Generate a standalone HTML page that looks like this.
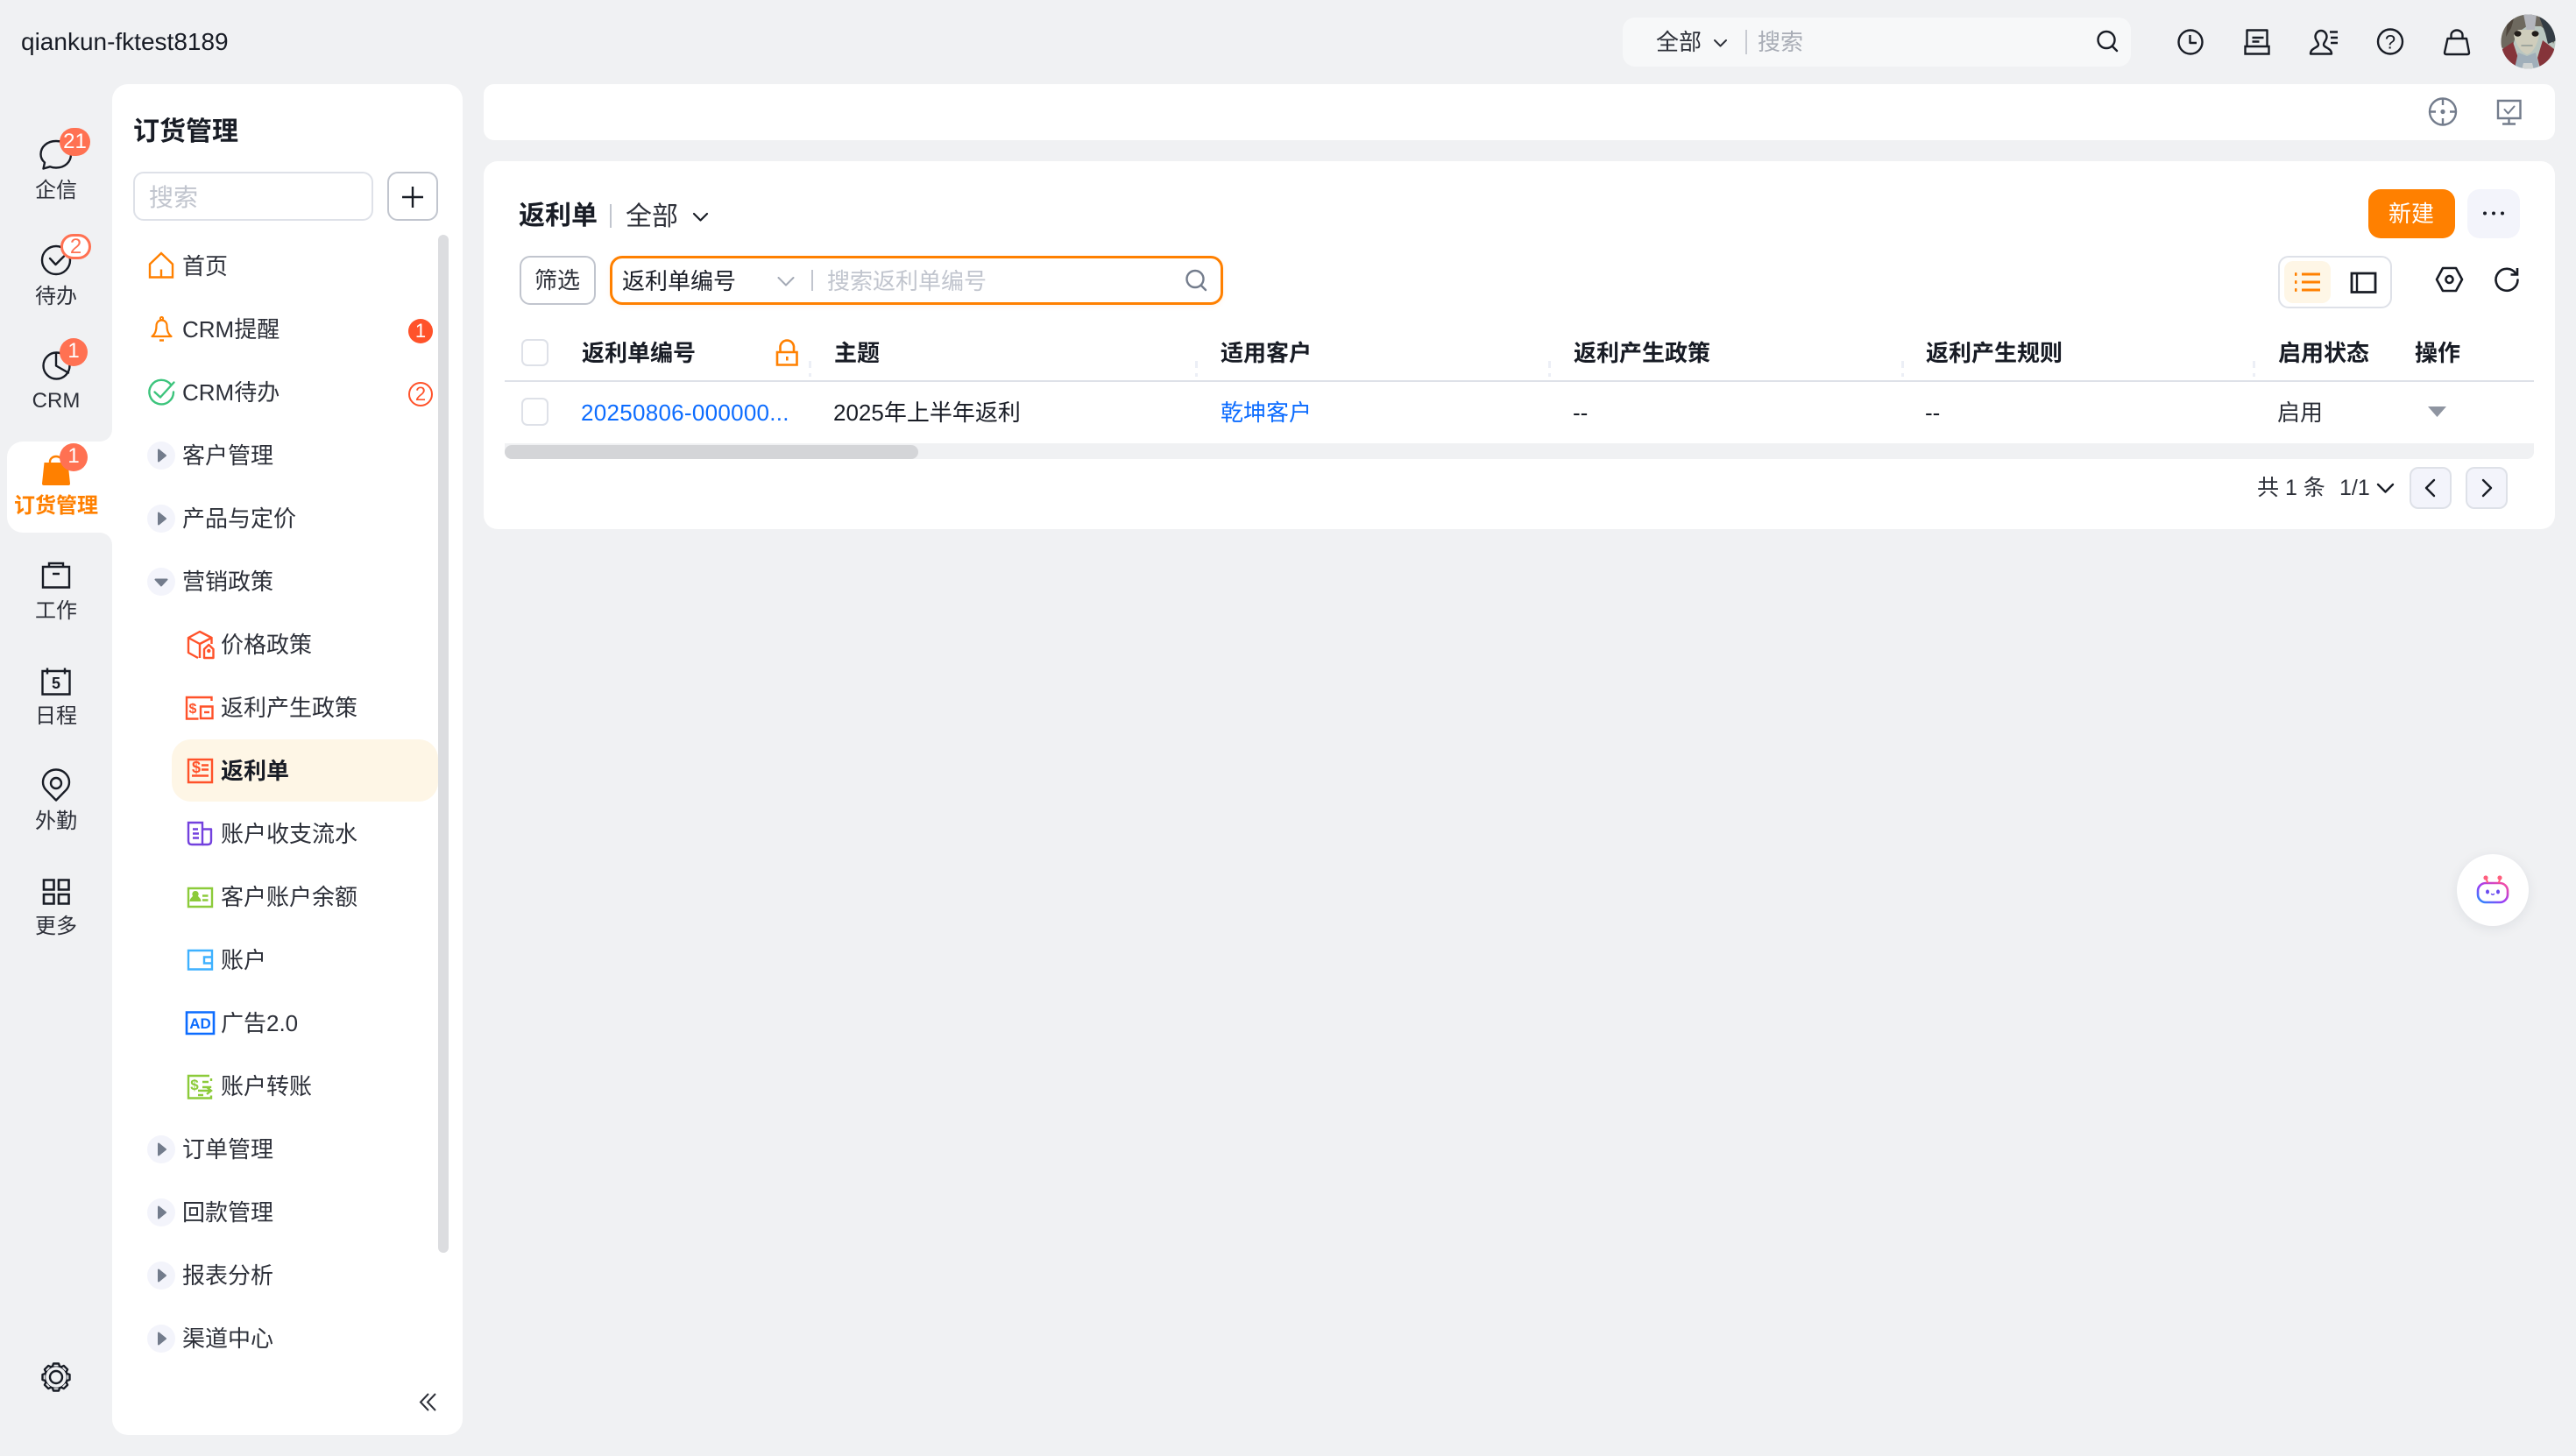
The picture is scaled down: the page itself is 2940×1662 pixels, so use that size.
<!DOCTYPE html>
<html lang="zh-CN">
<head>
<meta charset="utf-8">
<title>返利单</title>
<style>
html,body{margin:0;padding:0;width:2940px;height:1662px;overflow:hidden;background:#f0f1f3}
body{position:relative;font-family:"Liberation Sans","Noto Sans CJK SC",sans-serif;color:#181c25;-webkit-font-smoothing:antialiased}
.b{position:absolute;box-sizing:border-box}
.t{position:absolute;white-space:nowrap;line-height:40px;height:40px;font-size:26px;color:#2d3039}
.r{font-size:24px;width:128px;left:0;text-align:center;color:#2d3039}
.bold{font-weight:700;color:#181c25}
.link{color:#0c6cff}
.ph{color:#c1c5ce}
.bd{position:absolute;border-radius:50%;background:#ff7152;color:#fff;text-align:center;font-size:24px;box-sizing:border-box}
svg{position:absolute;left:0;top:0}
</style>
</head>
<body>
<!-- rail tile -->
<div class="b" style="left:100px;top:480px;width:40px;height:150px;background:#fff"></div>
<div class="b" style="left:80px;top:460px;width:48px;height:44px;background:#f0f1f3;border-bottom-right-radius:14px"></div>
<div class="b" style="left:80px;top:608px;width:48px;height:44px;background:#f0f1f3;border-top-right-radius:14px"></div>
<div class="b" style="left:8px;top:504px;width:120px;height:104px;background:#fff;border-radius:18px 0 0 18px"></div>

<!-- panels -->
<div class="b" style="left:128px;top:96px;width:400px;height:1542px;background:#fff;border-radius:18px"></div>
<div class="b" style="left:120px;top:504px;width:20px;height:104px;background:#fff"></div>
<div class="b" style="left:552px;top:96px;width:2364px;height:64px;background:#fff;border-radius:12px"></div>
<div class="b" style="left:552px;top:184px;width:2364px;height:420px;background:#fff;border-radius:16px"></div>

<!-- top -->
<div class="t" style="left:24px;top:28px;font-size:28px;color:#181c25">qiankun-fktest8189</div>
<div class="b" style="left:1852px;top:20px;width:580px;height:56px;background:#f7f8f9;border-radius:14px"></div>
<div class="t" style="left:1890px;top:28px;color:#2d3039">全部</div>
<div class="b" style="left:1992px;top:34px;width:2px;height:28px;background:#c8cbd2"></div>
<div class="t" style="left:2006px;top:28px;color:#a9adb6">搜索</div>

<!-- rail text -->
<div class="t r" style="top:198px">企信</div>
<div class="t r" style="top:319px">待办</div>
<div class="t r" style="top:438px">CRM</div>
<div class="t r" style="top:558px;color:#ff8000;font-weight:700">订货管理</div>
<div class="t r" style="top:678px">工作</div>
<div class="t r" style="top:798px">日程</div>
<div class="t r" style="top:918px">外勤</div>
<div class="t r" style="top:1038px">更多</div>

<!-- panel head -->
<div class="t bold" style="left:152px;top:131px;font-size:30px">订货管理</div>
<div class="b" style="left:152px;top:196px;width:274px;height:56px;border:2px solid #dee1e8;border-radius:12px"></div>
<div class="t ph" style="left:170px;top:206px;font-size:28px">搜索</div>
<div class="b" style="left:442px;top:196px;width:58px;height:56px;border:2px solid #c1c5ce;border-radius:12px"></div>

<!-- menu -->
<div class="b" style="left:196px;top:844px;width:304px;height:71px;background:#fef6e6;border-radius:22px"></div>
<div class="b" style="left:500px;top:268px;width:12px;height:1162px;background:#dcdde0;border-radius:6px"></div>
<div class="t" style="left:208px;top:284px">首页</div>
<div class="t" style="left:208px;top:356px">CRM提醒</div>
<div class="t" style="left:208px;top:428px">CRM待办</div>
<div class="t" style="left:208px;top:500px">客户管理</div>
<div class="t" style="left:208px;top:572px">产品与定价</div>
<div class="t" style="left:208px;top:644px">营销政策</div>
<div class="t" style="left:252px;top:716px">价格政策</div>
<div class="t" style="left:252px;top:788px">返利产生政策</div>
<div class="t bold" style="left:252px;top:860px">返利单</div>
<div class="t" style="left:252px;top:932px">账户收支流水</div>
<div class="t" style="left:252px;top:1004px">客户账户余额</div>
<div class="t" style="left:252px;top:1076px">账户</div>
<div class="t" style="left:252px;top:1148px">广告2.0</div>
<div class="t" style="left:252px;top:1220px">账户转账</div>
<div class="t" style="left:208px;top:1292px">订单管理</div>
<div class="t" style="left:208px;top:1364px">回款管理</div>
<div class="t" style="left:208px;top:1436px">报表分析</div>
<div class="t" style="left:208px;top:1508px">渠道中心</div>

<div class="bd" style="left:466px;top:364px;width:28px;height:28px;background:#ff522a;font-size:22px;line-height:28px">1</div>
<div class="bd" style="left:466px;top:436px;width:28px;height:28px;background:#fff;border:2px solid #ff522a;color:#ff522a;font-size:22px;line-height:24px">2</div>

<!-- content head -->
<div class="t bold" style="left:592px;top:227px;font-size:30px">返利单</div>
<div class="b" style="left:696px;top:233px;width:2px;height:27px;background:#c1c5ce"></div>
<div class="t" style="left:714px;top:228px;font-size:30px;color:#2d3039">全部</div>

<div class="b" style="left:593px;top:292px;width:87px;height:56px;border:2px solid #c1c5ce;border-radius:12px"></div>
<div class="t" style="left:610px;top:300px">筛选</div>
<div class="b" style="left:696px;top:292px;width:700px;height:56px;border:3px solid #ff8000;border-radius:14px;box-shadow:0 2px 6px rgba(255,128,0,.08)"></div>
<div class="t" style="left:710px;top:301px;color:#181c25">返利单编号</div>
<div class="b" style="left:926px;top:308px;width:2px;height:24px;background:#c1c5ce"></div>
<div class="t ph" style="left:944px;top:301px">搜索返利单编号</div>

<div class="b" style="left:2703px;top:216px;width:99px;height:56px;background:#ff8000;border-radius:14px"></div>
<div class="t" style="left:2726px;top:224px;color:#fff">新建</div>
<div class="b" style="left:2816px;top:216px;width:60px;height:56px;background:#f3f4fb;border-radius:14px"></div>

<div class="b" style="left:2600px;top:292px;width:130px;height:60px;border:2px solid #dee1e8;border-radius:12px"></div>
<div class="b" style="left:2607px;top:298px;width:53px;height:48px;background:#fef6e6;border-radius:10px"></div>

<!-- table -->
<div class="b" style="left:595px;top:387px;width:31px;height:31px;border:2px solid #dee1e8;border-radius:7px"></div>
<div class="b" style="left:595px;top:454px;width:31px;height:32px;border:2px solid #dee1e8;border-radius:7px"></div>
<div class="t bold" style="left:664px;top:383px">返利单编号</div>
<div class="t bold" style="left:952px;top:383px">主题</div>
<div class="t bold" style="left:1393px;top:383px">适用客户</div>
<div class="t bold" style="left:1796px;top:383px">返利产生政策</div>
<div class="t bold" style="left:2198px;top:383px">返利产生规则</div>
<div class="t bold" style="left:2600px;top:383px">启用状态</div>
<div class="t bold" style="left:2756px;top:383px">操作</div>
<div class="b" style="left:576px;top:434px;width:2316px;height:2px;background:#dee1e8"></div>
<div class="t link" style="left:663px;top:451px;letter-spacing:.28px">20250806-000000...</div>
<div class="t" style="left:951px;top:451px;color:#181c25">2025年上半年返利</div>
<div class="t link" style="left:1393px;top:451px">乾坤客户</div>
<div class="t" style="left:1795px;top:451px;color:#181c25">--</div>
<div class="t" style="left:2197px;top:451px;color:#181c25">--</div>
<div class="t" style="left:2599px;top:451px;color:#2d3039">启用</div>
<div class="b" style="left:576px;top:506px;width:2316px;height:18px;background:#f0f1f3;border-radius:0 0 8px 8px"></div>
<div class="b" style="left:576px;top:508px;width:472px;height:16px;background:#d4d5d8;border-radius:8px"></div>

<!-- pagination -->
<div class="t" style="left:2576px;top:537px;font-size:25px">共 1 条</div>
<div class="t" style="left:2670px;top:537px;font-size:25px">1/1</div>
<div class="b" style="left:2750px;top:533px;width:48px;height:48px;background:#f3f4fb;border:2px solid #dee1e8;border-radius:10px"></div>
<div class="b" style="left:2814px;top:533px;width:48px;height:48px;background:#f3f4fb;border:2px solid #dee1e8;border-radius:10px"></div>

<!-- bot -->
<div class="b" style="left:2804px;top:975px;width:82px;height:82px;background:#fff;border-radius:50%;box-shadow:0 3px 14px rgba(30,40,70,.08)"></div>

<!-- ICONS -->
<svg width="2940" height="1662" viewBox="0 0 2940 1662" fill="none" stroke-linecap="round" stroke-linejoin="round">
<defs>
<linearGradient id="botg" x1="0" y1="1" x2="1" y2="0"><stop offset="0" stop-color="#1e90ff"/><stop offset=".45" stop-color="#9b3cf5"/><stop offset="1" stop-color="#ff4f9a"/></linearGradient>
<clipPath id="av"><circle cx="2885.500" cy="47.500" r="31"/></clipPath>
</defs>

<!-- Top search -->
<g stroke="#2d3039" stroke-width="2"><path d="M1957 46l6.500 6.500 6.500-6.500"/></g>
<g stroke="#181c25" stroke-width="2.400"><circle cx="2404" cy="45.500" r="9.500"/><path d="M2411 53l5 5"/></g>

<!-- Top icons -->
<g stroke="#181c25" stroke-width="2.400">
<circle cx="2500" cy="48" r="13.500"/><path d="M2499.500 40v9h7.500" stroke-linecap="butt"/>
<path d="M2564.500 53V34.500h23V53" stroke-linecap="butt"/><path d="M2562.500 53h27v8.500h-27z" stroke-linecap="butt" stroke-linejoin="miter"/><path d="M2570.500 43h13M2570.500 47.500h8" stroke-linecap="butt"/>
<path d="M2649 35c-4 0-6.500 3.500-6.500 7 0 4 3.500 6 3.500 9 0 3.500-9 3.500-9 10.500h24c0-7-9-7-9-10.500 0-3 3.500-5 3.500-9 0-3.500-2.500-7-6.500-7z"/><path d="M2659 36.500h9M2660 43h8M2660 49h8" stroke-linecap="butt"/>
<circle cx="2728" cy="47.500" r="14"/>
<path d="M2793.500 44h21.500l3 16q0 2-2 2h-24q-2 0-2-2z"/><path d="M2797.500 44v-4a6.500 5.500 0 0 1 13 0v4"/>
</g>
<text x="2728" y="55.500" text-anchor="middle" font-family="Liberation Sans" font-size="22" fill="#181c25">?</text>

<!-- Avatar -->
<g clip-path="url(#av)">
<rect x="2854" y="16" width="64" height="64" fill="#b9c6c0"/>
<path d="M2854 16h64v26l-4 8-4-12-10-8-16 0-12 8-4 14-2 6-12-4z" fill="#6e695f"/>
<path d="M2880 16l4 20 7-1 1 6 3-25z" fill="#b4b6bd"/>
<path d="M2897 16l8 22 3 12 10-4V16z" fill="#333c44"/>
<path d="M2862 20l-2 22 6-10 4-14z" fill="#4e453c"/>
<path d="M2869 40c2 10 8 20 15 22 7-1 12-12 14-22l-6-6h-18z" fill="#cfcdbc"/>
<ellipse cx="2873.500" cy="38.500" rx="4" ry="3.200" fill="#221d1a"/><ellipse cx="2893.500" cy="38.500" rx="4" ry="3.200" fill="#221d1a"/>
<path d="M2878 52h12" stroke="#8f9a94" stroke-width="1.500"/>
<path d="M2856 56l12-8 6 18-4 16h-14zM2915 56l-13-10-6 20 4 16h14z" fill="#85343a"/>
<path d="M2874 60l10 4 10-4 5 22h-30z" fill="#a0afba"/>
<path d="M2880 72h10l2 8h-14z" fill="#cfd3d2"/>
</g>

<!-- Bar right icons -->
<g stroke="#737c8c" stroke-width="2.400">
<circle cx="2788" cy="127.500" r="15"/><path d="M2788 113v7M2788 135v7M2773 127.500h7M2796 127.500h7" stroke-linecap="butt"/>
<circle cx="2788" cy="127.500" r="2.600" fill="#737c8c" stroke="none"/>
<path d="M2851 115h25.500v20h-25.500zM2863.500 135v6M2856 141.500h15" stroke-linecap="butt" stroke-linejoin="miter"/><path d="M2858.500 125l4 4.500 7-8" stroke-width="2"/>
</g>

<!-- Rail icons -->
<g stroke="#181c25" stroke-width="2.400">
<path d="M64 161c-10 0-17.500 6.500-17.500 15 0 3.800 1.500 7 4.500 9.500l-1.500 7 7.500-2.200c2 .8 4.500 1.200 7 1.200 10 0 17-6.500 17-15.500S74 161 64 161z"/>
<circle cx="64" cy="297" r="16"/><path d="M57 295l6.500 7 9.500-9.500"/>
<circle cx="64.500" cy="417.500" r="15"/><path d="M64 403v14.500l14 8"/>
<path d="M49 647h30v23.500H49zM56 647v-4h16v4M60 655h8" stroke-linecap="butt" stroke-linejoin="miter"/>
<path d="M48.500 766h31v26.500h-31zM54 762.500v7M74 762.500v7" stroke-linecap="butt" stroke-linejoin="miter"/>
<path d="M64 913.500l-11.500-11.800c-2.200-2.400-3.500-5.500-3.500-8.700 0-8 6.700-14.500 15-14.500s15 6.500 15 14.500c0 3.200-1.300 6.300-3.500 8.700z"/><circle cx="64" cy="894" r="6"/>
<path d="M50 1004.500h11.500v11H50zM67 1004.500h11.500v11H67zM50 1021h11.500v10.500H50zM67 1021h11.500v10.500H67z" stroke-linejoin="miter" stroke-width="2.600"/>
<circle cx="64" cy="1572" r="7"/>
<circle cx="64" cy="1572" r="13"/>
<path d="M60 1559.500l1-3h6l1 3" fill="#f0f1f3"/>
<path transform="rotate(45 64 1572)" d="M60 1559.500l1-3h6l1 3" fill="#f0f1f3"/>
<path transform="rotate(90 64 1572)" d="M60 1559.500l1-3h6l1 3" fill="#f0f1f3"/>
<path transform="rotate(135 64 1572)" d="M60 1559.500l1-3h6l1 3" fill="#f0f1f3"/>
<path transform="rotate(180 64 1572)" d="M60 1559.500l1-3h6l1 3" fill="#f0f1f3"/>
<path transform="rotate(225 64 1572)" d="M60 1559.500l1-3h6l1 3" fill="#f0f1f3"/>
<path transform="rotate(270 64 1572)" d="M60 1559.500l1-3h6l1 3" fill="#f0f1f3"/>
<path transform="rotate(315 64 1572)" d="M60 1559.500l1-3h6l1 3" fill="#f0f1f3"/>
</g>
<text x="64" y="786" text-anchor="middle" font-family="Liberation Sans" font-weight="700" font-size="18" fill="#181c25">5</text>
<path d="M50.500 528H77.500l2.500 24q0 2-2 2H50q-2 0-2-2z" fill="#ff8000"/>
<path d="M57 529v-2a7 6 0 0 1 14 0v2" stroke="#ff8000" stroke-width="2.400"/>

<!-- Plus -->
<path d="M459 225h24M471 213v24" stroke="#181c25" stroke-width="2.400" stroke-linecap="butt"/>

<!-- Menu top icons -->
<g stroke="#ff8000" stroke-width="2.400" stroke-linejoin="miter" stroke-linecap="butt">
<path d="M171 316.500v-15L184 289l13 12.500v15zM184 316.500v-9"/>
<path d="M173.500 384c4-3 5-8 5-12 0-4 2.500-6.500 6-6.500s6 2.500 6 6.500c0 4 1 9 5 12z" stroke-linejoin="round" stroke-width="2.200"/><path d="M182 388.500h5"/><circle cx="184.500" cy="363.500" r="1.600" stroke-width="2"/>
</g>
<g stroke="#3cc47c" stroke-width="2.400">
<path d="M195 439a13.800 13.800 0 1 0 3 8.500"/><path d="M176.500 447.500l6.500 6 15.500-17"/>
</g>

<!-- Expand arrows -->
<g fill="#f3f4fb">
<circle cx="184" cy="520" r="16"/><circle cx="184" cy="592" r="16"/><circle cx="184" cy="664" r="16"/>
<circle cx="184" cy="1312" r="16"/><circle cx="184" cy="1384" r="16"/><circle cx="184" cy="1456" r="16"/><circle cx="184" cy="1528" r="16"/>
</g>
<g fill="#737c8c" stroke="#737c8c" stroke-width="2">
<path d="M181 513.500v13l8-6.500z"/><path d="M181 585.500v13l8-6.500z"/>
<path d="M177.500 661.500h13l-6.500 7z"/>
<path d="M181 1305.500v13l8-6.500z"/><path d="M181 1377.500v13l8-6.500z"/><path d="M181 1449.500v13l8-6.500z"/><path d="M181 1521.500v13l8-6.500z"/>
</g>

<!-- Sub icons -->
<g stroke="#ff522a" stroke-width="2.400" stroke-linecap="butt">
<path d="M215 728l13-7 13.500 7-13.500 7zM215 728v17l11 6M228 735v16M241.500 728v7"/>
<path d="M233 751h10.500v-10l-5.200-5-5.300 5z"/><circle cx="238.300" cy="743" r="1" fill="#ff522a"/>
<path d="M241.500 800v-4H213v24.500h13.500" stroke-linejoin="miter"/><path d="M229 806.500h13.500V820H229z" stroke-linejoin="miter"/><path d="M233 813h6"/>
<path d="M215 867h27v26h-27z" stroke-linejoin="miter"/><path d="M230 873.500h8M230 878.500h8M219 885.500h19"/>
</g>
<g font-family="Liberation Sans" font-weight="700" font-size="16" fill="#ff522a" text-anchor="middle">
<text x="220" y="814">$</text><text x="224" y="882" font-size="18">$</text>
</g>
<g stroke="#7341de" stroke-width="2.400" stroke-linecap="butt">
<path d="M215 939h16v25h-12q-4 0-4-4z" stroke-linejoin="miter"/><path d="M231 946.500h10V960q0 4-4 4h-6"/><path d="M220 946.500h6M220 951.500h7M220 956.500h7"/>
</g>
<g stroke="#8ccb3a" stroke-width="2.400" stroke-linecap="butt">
<path d="M215 1014h27v21h-27z" stroke-linejoin="miter"/><path d="M231 1022.500h6.500M231 1027.500h6.500"/>
</g>
<path d="M223 1017a3.500 3.500 0 0 1 3 5.500c0 1.500 3.500 2.500 3.500 6.500h-13c0-4 3.500-5 3.500-6.500a3.500 3.500 0 0 1 3-5.500z" fill="#8ccb3a"/>
<g stroke="#3eb1ff" stroke-width="2.400" stroke-linecap="butt" stroke-linejoin="miter">
<path d="M215 1085h27v21.500h-27z"/><path d="M242 1092.500h-9v7h9"/>
</g>
<path d="M213 1155.500h31v24.500h-31z" stroke="#0c6cff" stroke-width="2.600" stroke-linejoin="miter"/>
<text x="228.500" y="1174" text-anchor="middle" font-family="Liberation Sans" font-weight="700" font-size="17" fill="#0c6cff">AD</text>
<g stroke="#8ccb3a" stroke-width="2.400" stroke-linecap="butt" stroke-linejoin="miter">
<path d="M239 1228h-24v25.500h26v-3M241 1234v-3M231 1235h7"/><path d="M231 1241h9v1M226 1245h14M236 1241l5 4-5 4M226 1250h6"/>
</g>
<text x="222" y="1244" text-anchor="middle" font-family="Liberation Sans" font-weight="700" font-size="17" fill="#8ccb3a">$</text>

<!-- Collapse -->
<path d="M489 1591l-9 9.500 9 9.500M497 1591l-9 9.500 9 9.500" stroke="#2d3039" stroke-width="2" stroke-linecap="butt" stroke-linejoin="miter"/>

<!-- Content -->
<path d="M792 244l7.500 7.500 7.500-7.500" stroke="#181c25" stroke-width="2.200"/>
<path d="M888.500 317l8.500 8.500 8.500-8.500" stroke="#a3a9b5" stroke-width="2"/>
<g stroke="#737c8c" stroke-width="2.400"><circle cx="1364" cy="318.500" r="9.500"/><path d="M1371 326l5 5"/></g>
<!-- lock -->
<g stroke="#ff8000" stroke-width="2.600" stroke-linecap="butt"><path d="M887 402h22.500v14.500H887z" stroke-linejoin="miter"/><path d="M890.500 402v-6.500a7.800 7.800 0 0 1 15.500 0v6.500M898.300 407v4.500"/></g>
<!-- separators -->
<g fill="#eceff6">
<rect x="923" y="412" width="3" height="8"/><rect x="923" y="426" width="3" height="4"/>
<rect x="1364" y="412" width="3" height="8"/><rect x="1364" y="426" width="3" height="4"/>
<rect x="1767" y="412" width="3" height="8"/><rect x="1767" y="426" width="3" height="4"/>
<rect x="2170" y="412" width="3" height="8"/><rect x="2170" y="426" width="3" height="4"/>
<rect x="2571" y="412" width="3" height="8"/><rect x="2571" y="426" width="3" height="4"/>
</g>
<path d="M2771 464h21l-10.500 12z" fill="#8f95a1"/>
<!-- more dots -->
<g fill="#181c25"><circle cx="2836" cy="243.500" r="2"/><circle cx="2846" cy="243.500" r="2"/><circle cx="2856" cy="243.500" r="2"/></g>
<!-- list/card -->
<g fill="#ff8000"><rect x="2619" y="311" width="2.500" height="4" rx="1"/><rect x="2619" y="320" width="2.500" height="4" rx="1"/><rect x="2619" y="329" width="2.500" height="4" rx="1"/>
<rect x="2627" y="311.500" width="21" height="3"/><rect x="2627" y="320.500" width="21" height="3"/><rect x="2627" y="329.500" width="21" height="3"/></g>
<g stroke="#181c25" stroke-width="2.800" stroke-linecap="butt"><path d="M2684 312h27v21.500h-27z" stroke-linejoin="miter"/><path d="M2690 312v21.500" stroke-width="2.400"/></g>
<!-- hex / refresh -->
<g stroke="#181c25" stroke-width="2.600">
<path d="M2788 306h15l7 13-7 13h-15l-7-13z"/><circle cx="2795.500" cy="319" r="4"/>
<path d="M2871.500 312.500a12.500 12.500 0 1 0 2 7"/><path d="M2873 306v7.500h-7.500" stroke-linecap="butt" stroke-linejoin="miter"/>
</g>
<!-- pagination -->
<g stroke="#181c25" stroke-width="2.400">
<path d="M2714 553l8.500 8.500 8.500-8.500"/><path d="M2778 548l-9 9 9 9"/><path d="M2834 548l9 9-9 9"/>
</g>
<!-- bot -->
<rect x="2828" y="1008" width="34" height="22" rx="9" stroke="url(#botg)" stroke-width="2.600"/>
<path d="M2839 1007l-1.500-4M2852 1007l1.500-4" stroke="#ff5f7e" stroke-width="2"/>
<circle cx="2837" cy="1002" r="2.600" fill="#ff5f7e"/><circle cx="2853" cy="1002" r="2.600" fill="#ff5f7e"/>
<ellipse cx="2839" cy="1018" rx="2" ry="2.500" fill="#6a4cf0"/><ellipse cx="2851" cy="1018" rx="2" ry="2.500" fill="#6a4cf0"/>
<path d="M2843.500 1020.500q1.500 1.500 3 0" stroke="#6a4cf0" stroke-width="1.400"/>
</svg>

<!-- Rail badges (above icons) -->
<div class="bd" style="left:68px;top:146px;width:35px;height:32px;border-radius:16px;line-height:32px;z-index:2">21</div>
<div class="bd" style="left:69px;top:267px;width:35px;height:29px;border-radius:15px;background:#fff;border:3px solid #ff7152;color:#ff7152;line-height:23px;z-index:2">2</div>
<div class="bd" style="left:68px;top:386px;width:32px;height:32px;line-height:30px;z-index:2">1</div>
<div class="bd" style="left:68px;top:506px;width:32px;height:32px;line-height:30px;z-index:2">1</div>
</body>
</html>
